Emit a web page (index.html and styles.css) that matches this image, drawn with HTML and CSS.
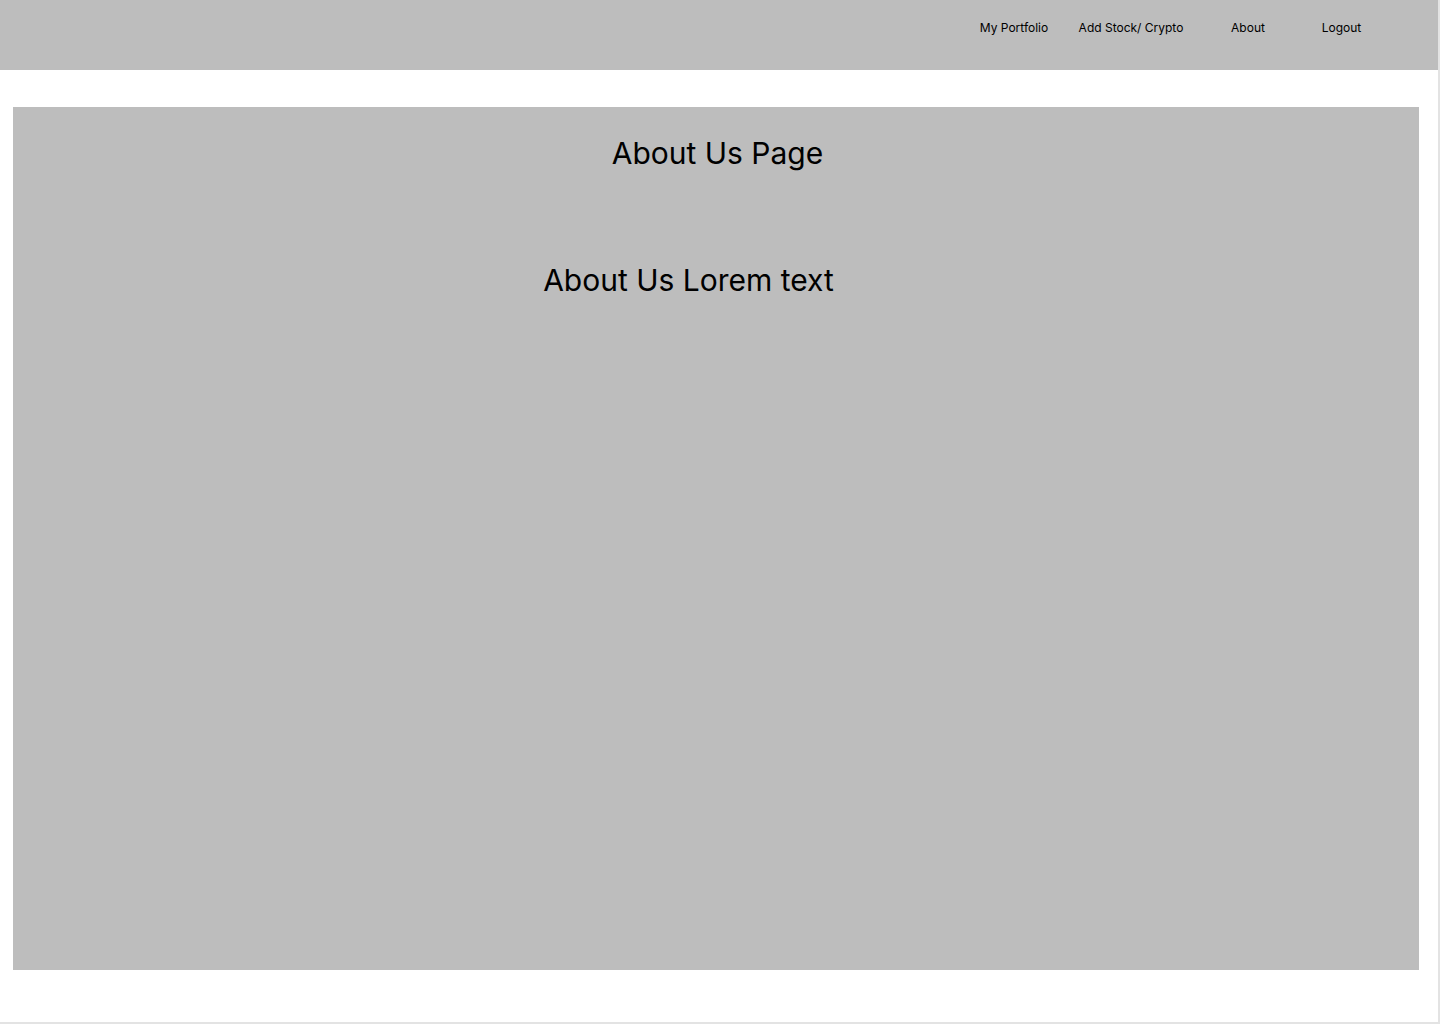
FILE: index.html
```html
<!DOCTYPE html>
<html lang="en">
<head>
<meta charset="utf-8">
<title>About Us</title>
<link rel="stylesheet" href="styles.css">
</head>
<body>
<div class="frame">
  <header class="topbar">
    <nav class="nav">
      <a class="nav-item" href="#">My Portfolio</a>
      <a class="nav-item" href="#">Add Stock/ Crypto</a>
      <a class="nav-item" href="#">About</a>
      <a class="nav-item nav-item--last" href="#">Logout</a>
    </nav>
  </header>
  <main class="content">
    <section class="panel">
      <h1 class="panel-title">About Us Page</h1>
      <p class="panel-text">About Us Lorem text</p>
    </section>
  </main>
</div>
</body>
</html>
```

FILE: styles.css
```css
html, body {
  margin: 0;
  padding: 0;
  background: #ffffff;
}

body {
  font-family: Inter, "Noto Sans", "Liberation Sans", sans-serif;
  color: #000000;
}

.frame {
  width: 1438px;
  height: 1022px;
  border-right: 2px solid #e3e3e3;
  border-bottom: 2px solid #e3e3e3;
  background: #ffffff;
  display: flex;
  flex-direction: column;
}

.topbar {
  height: 70px;
  background: #bdbdbd;
  display: flex;
  justify-content: flex-end;
}

.nav {
  display: flex;
  align-items: flex-start;
  padding-right: 61.5px;
  padding-top: 20px;
}

.nav-item {
  width: 117px;
  text-align: center;
  font-size: 12px;
  line-height: 16px;
  color: #000000;
  text-decoration: none;
}

.nav-item--last {
  width: 70px;
}

.content {
  flex: 1;
  padding: 37px 19px 52px 13px;
  display: flex;
}

.panel {
  flex: 1;
  background: #bdbdbd;
  display: flex;
  flex-direction: column;
  padding-top: 28px;
}

.panel-title {
  margin: 0;
  font-size: 30px;
  font-weight: 400;
  line-height: 36px;
  text-align: center;
  padding-left: 3px;
}

.panel-text {
  margin: 91px 0 0 0;
  font-size: 30px;
  font-weight: 400;
  line-height: 36px;
  text-align: center;
  padding-right: 55px;
}
```
